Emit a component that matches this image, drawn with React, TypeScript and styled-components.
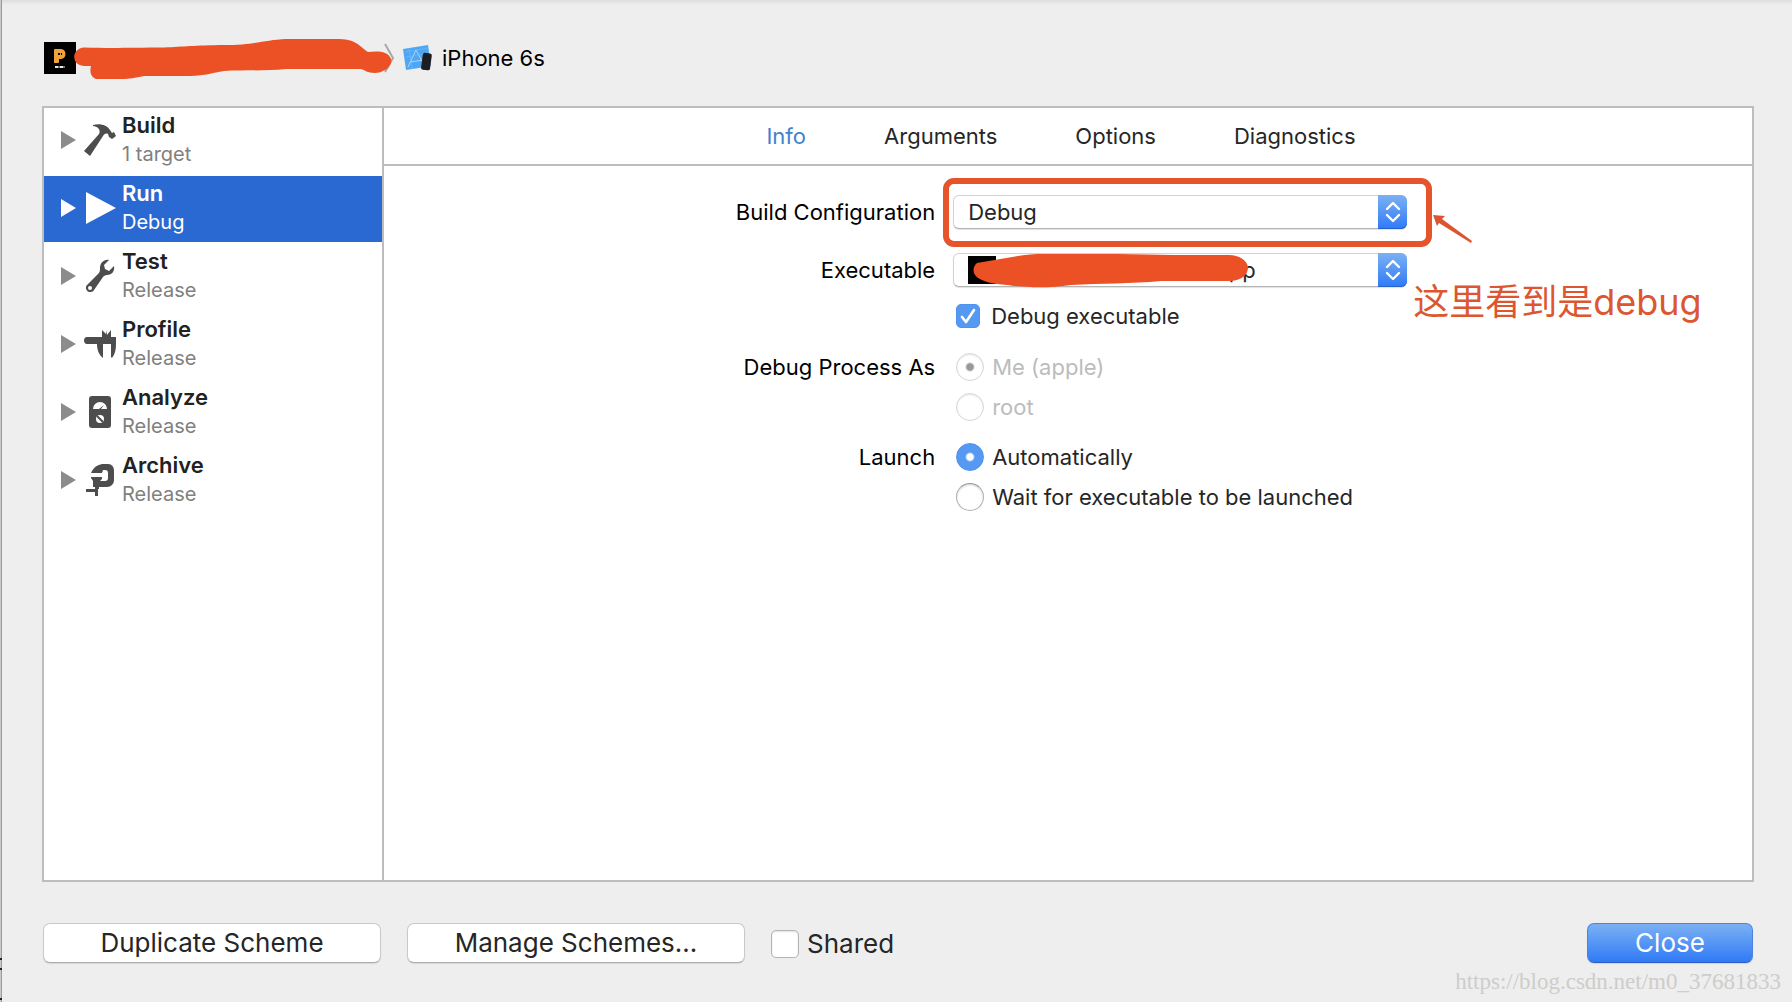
import React from "react";
import styled, { createGlobalStyle, css } from "styled-components";

const font = `Inter, "Noto Sans CJK SC", sans-serif`;
const line = "#bdbdbd";
const marker = "#ec5126";

const GlobalStyle = createGlobalStyle`
  *, *::before, *::after { box-sizing: border-box; }
  body { margin: 0; background: #eeeeee; font-family: ${font}; color: #262626; }
  button, input, select { font: inherit; color: inherit; margin: 0; }
  svg { display: block; overflow: visible; }
`;

const Sheet = styled.main`
  position: relative;
  min-height: 100vh;
  display: flex;
  flex-direction: column;
  padding: 42px 38px 39px 42px;
  background: linear-gradient(#dedede, #eeeeee 5px);
`;

const WindowEdge = styled.div`
  position: absolute;
  inset: 0 auto 0 0;
  width: 2px;
  background: #c9c9cc;
  border-right: 1px solid #9c9c9e;
`;

const EdgeMark = styled.i<{ $bottom: number }>`
  position: absolute;
  left: 0;
  bottom: ${(p) => p.$bottom}px;
  width: 2px;
  height: 2px;
  background: #222222;
`;

const Header = styled.header`
  display: flex;
  align-items: center;
  height: 32px;
  margin-bottom: 32px;
  padding-left: 2px;
  font-size: 22px;
  line-height: 32px;
  color: #000000;
`;

const Redacted = styled.div`
  flex: none;
  width: 318px;
  height: 32px;
`;

const Destination = styled.span`
  margin-left: 10px;
`;

const DeviceIcon = styled.div`
  flex: none;
  margin-left: 8px;
`;

const Panel = styled.section`
  flex: 1;
  display: flex;
  border: 2px solid ${line};
  background: #ffffff;
`;

const Sidebar = styled.nav`
  flex: none;
  width: 340px;
  border-right: 2px solid ${line};
  display: flex;
  flex-direction: column;
  gap: 2px;
`;

const ActionRow = styled.button<{ $selected?: boolean }>`
  display: flex;
  align-items: center;
  width: 100%;
  height: 66px;
  padding: 0 0 2px 17px;
  border: 0;
  text-align: left;
  background: ${(p) => (p.$selected ? "#2a69d2" : "transparent")};
  --title: ${(p) => (p.$selected ? "#ffffff" : "#222222")};
  --sub: ${(p) => (p.$selected ? "#ffffff" : "#808080")};
  --arrow: ${(p) => (p.$selected ? "#ffffff" : "#8c8c8c")};
  --glyph: ${(p) => (p.$selected ? "#ffffff" : "#4d4d4d")};
`;

const ActionIcon = styled.span`
  flex: none;
  margin: 0 6px 0 8px;
`;

const ActionText = styled.span`
  display: flex;
  flex-direction: column;
  line-height: 28px;
`;

const ActionTitle = styled.span`
  font-size: 22px;
  font-weight: 600;
  color: var(--title);
`;

const ActionSub = styled.span`
  font-size: 20px;
  line-height: 30px;
  color: var(--sub);
`;

const Editor = styled.div`
  position: relative;
  flex: 1;
  min-width: 0;
`;

const Tabs = styled.div`
  display: flex;
  justify-content: center;
  gap: 78px;
  height: 58px;
  padding-right: 14px;
  border-bottom: 2px solid ${line};
`;

const Tab = styled.button<{ $active?: boolean }>`
  border: 0;
  padding: 0;
  background: none;
  font-size: 22px;
  color: ${(p) => (p.$active ? "#3f83cf" : "#262626")};
`;

const Form = styled.form`
  padding: 29px 0 0 2px;
`;

const Row = styled.div<{ $gap?: number }>`
  display: grid;
  grid-template-columns: 11fr 16fr;
  column-gap: 18px;
  margin-top: ${(p) => p.$gap ?? 0}px;
`;

const rowLabel = css`
  font-size: 22px;
  text-align: right;
  color: #000000;
`;

const FieldLabel = styled.label`
  ${rowLabel}
  line-height: 34px;
`;

const GroupLabel = styled.span`
  ${rowLabel}
  line-height: 28px;
`;

const Field = styled.div`
  grid-column: 2;
  position: relative;
  width: 454px;
`;

const PopUp = styled.div`
  display: grid;
  grid-template-columns: 1fr 29px;
  height: 34px;
`;

const PopUpSelect = styled.select<{ $indent: number }>`
  grid-area: 1 / 1 / 2 / 3;
  appearance: none;
  width: 100%;
  height: 34px;
  padding: 0 34px 0 ${(p) => p.$indent}px;
  border: 1px solid #d2d2d2;
  border-bottom-color: #b4b4b4;
  border-radius: 6px;
  background: #ffffff;
  box-shadow: 0 1px 1px rgba(0, 0, 0, 0.12);
  font-size: 22px;
`;

const PopUpArrows = styled.span`
  grid-area: 1 / 2 / 2 / 3;
  z-index: 1;
  display: grid;
  place-items: center;
  pointer-events: none;
  border-radius: 0 6px 6px 0;
  background: linear-gradient(#7bb1f3, #2f7af7);
  box-shadow: inset 0 -1px 0 #2762cf;
`;

const Frame = styled.div`
  position: absolute;
  inset: -17px -25px -18px -10px;
  border: 6px solid #e5542b;
  border-radius: 11px;
  pointer-events: none;
`;

const Pointer = styled.svg`
  position: absolute;
  left: 480px;
  top: 20px;
`;

const Note = styled.p`
  position: absolute;
  left: 460px;
  top: 30px;
  margin: 0;
  font-size: 36px;
  line-height: 38px;
  white-space: nowrap;
  color: #dc5730;
`;

const Scribble = styled.svg`
  position: absolute;
  left: 15px;
  top: 0;
  z-index: 2;
  pointer-events: none;
`;

const Choices = styled.div`
  grid-column: 2;
  display: flex;
  flex-direction: column;
  align-items: flex-start;
  gap: 12px;
  padding-left: 3px;
`;

const Choice = styled.label<{ $disabled?: boolean; $large?: boolean }>`
  display: flex;
  align-items: center;
  gap: 8px;
  padding-top: ${(p) => (p.$large ? 2 : 0)}px;
  font-size: ${(p) => (p.$large ? 26 : 22)}px;
  line-height: 28px;
  color: ${(p) => (p.$disabled ? "#bcbcbc" : "#262626")};
`;

const Radio = styled.input`
  appearance: none;
  width: 28px;
  height: 28px;
  border: 1px solid #b0b0b0;
  border-top-color: #989898;
  border-radius: 50%;
  background: #ffffff;
  box-shadow: inset 0 1px 2px rgba(0, 0, 0, 0.18);
  &:checked {
    border-color: #5093ee;
    background: radial-gradient(circle, #ffffff 3px, #5699f2 5px);
    box-shadow: none;
  }
  &:disabled {
    border-color: #d6d6d6;
    box-shadow: inset 0 1px 2px rgba(0, 0, 0, 0.1);
  }
  &:disabled:checked {
    background: radial-gradient(circle, #989898 3px, #ffffff 5px);
  }
`;

const Check = styled.input<{ $size: number }>`
  appearance: none;
  width: ${(p) => p.$size}px;
  height: ${(p) => p.$size}px;
  border: 1px solid #b4b4b4;
  border-radius: 5px;
  background: #ffffff;
  box-shadow: inset 0 1px 2px rgba(0, 0, 0, 0.12);
  &:checked {
    border-color: #5093ee;
    background: #5699f2;
    box-shadow: none;
  }
`;

const CheckBox = styled.span`
  display: grid;
  margin-right: 3px;
  > * { grid-area: 1 / 1; }
  > svg { pointer-events: none; }
`;

const Footer = styled.footer`
  display: flex;
  align-items: center;
  gap: 26px;
  margin-top: 41px;
  padding: 0 1px;
`;

const PushButton = styled.button<{ $primary?: boolean }>`
  width: ${(p) => (p.$primary ? 166 : 338)}px;
  height: 40px;
  margin-left: ${(p) => (p.$primary ? "auto" : 0)};
  padding: 0;
  border: 1px solid ${(p) => (p.$primary ? "#4c84dd" : "#c9c9c9")};
  border-bottom-color: ${(p) => (p.$primary ? "#2c60c4" : "#acacac")};
  border-radius: 7px;
  background: ${(p) => (p.$primary ? "linear-gradient(#7bb1f3, #2f7af7)" : "#ffffff")};
  box-shadow: 0 1px 1px rgba(0, 0, 0, 0.1);
  font-size: 26px;
  line-height: 38px;
  color: ${(p) => (p.$primary ? "#ffffff" : "#262626")};
`;

const Watermark = styled.span`
  position: absolute;
  right: 11px;
  bottom: 8px;
  font-family: "Liberation Serif", serif;
  font-size: 23px;
  line-height: 24px;
  color: #cdcdcb;
`;

const glyphs: Record<string, React.ReactNode> = {
  Build: (
    <path d="M9 1C16-1 23 1 26 6l2 3 2-1 2 4-4 3-3-2-1-3c-2-1-4 0-5 2L6 32l-6-5L15 10c1-2 1-4-1-6-1-1-3-2-5-2z" />
  ),
  Run: <path d="M2 0 32 16 2 32z" />,
  Test: (
    <path
      fillRule="evenodd"
      d="M25 0c-5-1-9 3-9 8 0 2 0 3-1 5L3 25c-2 2-1 6 2 7 2 0 4 0 5-2l9-13c1-1 2-2 4-2 5 0 8-4 7-9l-5 5-4-2-1-4zM6 26a2 2 0 1 1 0 4 2 2 0 0 1 0-4z"
    />
  ),
  Profile: (
    <path d="M3 9h15V2l4 4V2l1 5 4-5v7h5v7c0 6-1 10-4 14l-1-1V16h-8v14c-4-3-6-8-6-14H3c-4 0-4-7 0-7z" />
  ),
  Analyze: (
    <>
      <rect x="5" y="0" width="22" height="32" rx="3" />
      <path d="M9 13a7 7 0 0 1 14 0h-6l3-4-5 4z" fill="#fff" />
      <circle cx="16" cy="23" r="4" fill="#fff" />
      <path d="m13 20 6 6" stroke="var(--glyph)" strokeWidth="2" />
    </>
  ),
  Archive: (
    <path d="M8 7C11 2 15 0 20 0h4c4 0 6 3 6 7v9c0 4-3 7-7 7h-8v2h-1v7h-3v-4H2v-3h9v-2H9v-6L7 14v-1h11v2l-2 2h5c2 0 3-1 3-3V9c0-2-1-3-3-3h-2l-1 3H7z" />
  ),
};

const actions = [
  ["Build", "1 target"],
  ["Run", "Debug"],
  ["Test", "Release"],
  ["Profile", "Release"],
  ["Analyze", "Release"],
  ["Archive", "Release"],
];

function Arrows() {
  return (
    <PopUpArrows>
      <svg width="14" height="20" viewBox="0 0 14 20" fill="none" stroke="#fff" strokeWidth="2.4" strokeLinecap="round" strokeLinejoin="round">
        <path d="m1 7 6-6 6 6M1 13l6 6 6-6" />
      </svg>
    </PopUpArrows>
  );
}

export default function App() {
  return (
    <>
      <GlobalStyle />
      <Sheet>
        <WindowEdge>
          <EdgeMark $bottom={42} />
          <EdgeMark $bottom={32} />
          <EdgeMark $bottom={2} />
        </WindowEdge>
        <Header>
          <svg width="32" height="32" viewBox="0 0 32 32">
            <rect width="32" height="32" />
            <path fill="#f0a23c" fillRule="evenodd" d="M10 8q0-1 1-1h6c6 0 6 10 0 10h-2v3q0 1-1 1h-4zM14 11v2h2v-2zM17 11v2h1v-2z" />
            <path stroke="#e8e8e8" strokeWidth="2" strokeDasharray="3 .5 1 .5" d="M11 25h10" />
          </svg>
          <Redacted>
            <svg width="318" height="32" viewBox="76 42 318 32">
              <path d="M385 44l8 14-8 14" fill="none" stroke="#a8a8a8" strokeWidth="2" />
              <path fill={marker} d="M84 47.500c30 1 50 0 80 0 20-1 30-2 60-2.500 30 0 40-5 62-6h50c20 0 22 6 32 13 10-1 20-1 23 7 2 8-9 14-16 14-8 0-10-3-14-4h-75c-20 2-40 1-62 2-16 3-22 5-40 5h-40c-10 2-14 3-22 3H98c-6 0-9-6-7-13h-7c-14-1-12-18 0-18.500z" />
            </svg>
          </Redacted>
          <DeviceIcon>
            <svg width="30" height="26" viewBox="0 0 30 26">
              <path d="M1 4 26 0l3 21-25 4z" fill="#4fa6f2" />
              <path d="M6 22 14 5l8 15M8 17l13-2" stroke="#a9d6fb" fill="none" />
              <path d="M3 7l23-4M4 12l23-4M7 3l3 21" stroke="#7dc0f7" strokeWidth=".5" fill="none" />
              <rect x="20" y="8" width="9" height="17" rx="2" fill="#1c1e22" transform="rotate(8 24 16)" />
            </svg>
          </DeviceIcon>
          <Destination>iPhone 6s</Destination>
        </Header>

        <Panel>
          <Sidebar>
            {actions.map(([title, sub]) => (
              <ActionRow key={title} type="button" $selected={title === "Run"}>
                <svg width="15" height="18" viewBox="0 0 15 18" fill="var(--arrow)">
                  <path d="M0 0 15 9 0 18z" />
                </svg>
                <ActionIcon>
                  <svg width="32" height="32" viewBox="0 0 32 32" fill="var(--glyph)">
                    {glyphs[title]}
                  </svg>
                </ActionIcon>
                <ActionText>
                  <ActionTitle>{title}</ActionTitle>
                  <ActionSub>{sub}</ActionSub>
                </ActionText>
              </ActionRow>
            ))}
          </Sidebar>

          <Editor>
            <Tabs>
              <Tab type="button" $active>Info</Tab>
              <Tab type="button">Arguments</Tab>
              <Tab type="button">Options</Tab>
              <Tab type="button">Diagnostics</Tab>
            </Tabs>
            <Form>
              <Row>
                <FieldLabel htmlFor="configuration">Build Configuration</FieldLabel>
                <Field>
                  <PopUp>
                    <PopUpSelect id="configuration" $indent={14}>
                      <option>Debug</option>
                    </PopUpSelect>
                    <Arrows />
                  </PopUp>
                  <Frame />
                  <Pointer width="40" height="30" viewBox="0 0 40 30">
                    <path fill="#dc5430" d="M0 0 12 1 9 4 39 26 38 28 6 8 4 11z" />
                  </Pointer>
                </Field>
              </Row>
              <Row $gap={24}>
                <FieldLabel htmlFor="executable">Executable</FieldLabel>
                <Field>
                  <PopUp>
                    <PopUpSelect id="executable" $indent={256}>
                      <option>.app</option>
                    </PopUpSelect>
                    <Arrows />
                  </PopUp>
                  <Scribble width="290" height="34" viewBox="968 253 290 34">
                    <rect x="968" y="256" width="28" height="28" />
                    <path fill={marker} d="M977 263c20-3 40-8 60-9h80c40 1 70 1 112 1 10 0 18 5 19 12 0 8-6 13-17 14h-70c-30 3-60 2-90 4-25 4-50 2-64 0-14-1-22-3-27-6-8-4-8-12-3-16z" />
                  </Scribble>
                  <Note>这里看到是debug</Note>
                </Field>
              </Row>
              <Row $gap={15}>
                <Choices>
                  <Choice>
                    <CheckBox>
                      <Check type="checkbox" $size={24} defaultChecked />
                      <svg width="24" height="24" viewBox="0 0 24 24" fill="none" stroke="#fff" strokeWidth="2.600" strokeLinecap="round" strokeLinejoin="round">
                        <path d="m6 13 4 5 8-12" />
                      </svg>
                    </CheckBox>
                    Debug executable
                  </Choice>
                </Choices>
              </Row>
              <Row $gap={23} role="radiogroup" aria-labelledby="process">
                <GroupLabel id="process">Debug Process As</GroupLabel>
                <Choices>
                  <Choice $disabled><Radio type="radio" name="process" disabled defaultChecked />Me (apple)</Choice>
                  <Choice $disabled><Radio type="radio" name="process" disabled />root</Choice>
                </Choices>
              </Row>
              <Row $gap={22} role="radiogroup" aria-labelledby="launch">
                <GroupLabel id="launch">Launch</GroupLabel>
                <Choices>
                  <Choice><Radio type="radio" name="launch" defaultChecked />Automatically</Choice>
                  <Choice><Radio type="radio" name="launch" />Wait for executable to be launched</Choice>
                </Choices>
              </Row>
            </Form>
          </Editor>
        </Panel>

        <Footer>
          <PushButton type="button">Duplicate Scheme</PushButton>
          <PushButton type="button">Manage Schemes...</PushButton>
          <Choice $large><Check type="checkbox" $size={28} />Shared</Choice>
          <PushButton type="button" $primary>Close</PushButton>
        </Footer>
        <Watermark>https://blog.csdn.net/m0_37681833</Watermark>
      </Sheet>
    </>
  );
}
